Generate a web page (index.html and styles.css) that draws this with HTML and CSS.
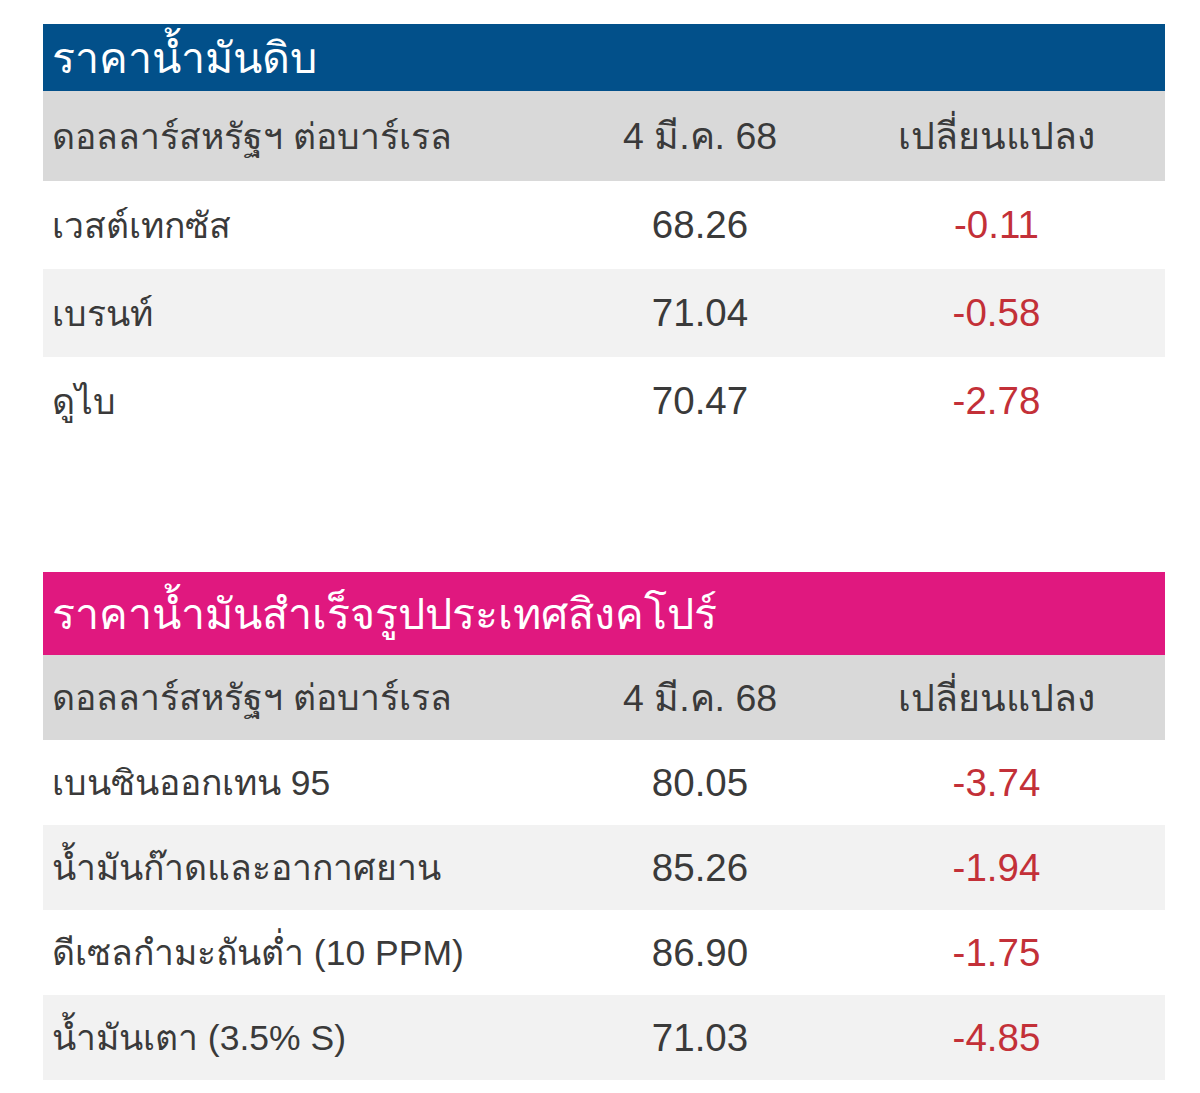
FILE: index.html
```html
<!DOCTYPE html>
<html lang="th">
<head>
<meta charset="utf-8">
<title>ราคาน้ำมัน</title>
<link rel="stylesheet" href="styles.css">
</head>
<body>
<div class="page">
  <section class="block block-crude">
    <h2 class="block-title title-blue">ราคาน้ำมันดิบ</h2>
    <table class="price-table">
      <colgroup><col class="c1"><col class="c2"><col class="c3"></colgroup>
      <thead>
        <tr><th class="label">ดอลลาร์สหรัฐฯ ต่อบาร์เรล</th><th>4 มี.ค. 68</th><th>เปลี่ยนแปลง</th></tr>
      </thead>
      <tbody>
        <tr><td class="label">เวสต์เทกซัส</td><td>68.26</td><td class="neg">-0.11</td></tr>
        <tr><td class="label">เบรนท์</td><td>71.04</td><td class="neg">-0.58</td></tr>
        <tr><td class="label">ดูไบ</td><td>70.47</td><td class="neg">-2.78</td></tr>
      </tbody>
    </table>
  </section>
  <section class="block block-sg">
    <h2 class="block-title title-pink">ราคาน้ำมันสำเร็จรูปประเทศสิงคโปร์</h2>
    <table class="price-table">
      <colgroup><col class="c1"><col class="c2"><col class="c3"></colgroup>
      <thead>
        <tr><th class="label">ดอลลาร์สหรัฐฯ ต่อบาร์เรล</th><th>4 มี.ค. 68</th><th>เปลี่ยนแปลง</th></tr>
      </thead>
      <tbody>
        <tr><td class="label">เบนซินออกเทน 95</td><td>80.05</td><td class="neg">-3.74</td></tr>
        <tr><td class="label">น้ำมันก๊าดและอากาศยาน</td><td>85.26</td><td class="neg">-1.94</td></tr>
        <tr><td class="label">ดีเซลกำมะถันต่ำ (10 PPM)</td><td>86.90</td><td class="neg">-1.75</td></tr>
        <tr><td class="label">น้ำมันเตา (3.5% S)</td><td>71.03</td><td class="neg">-4.85</td></tr>
      </tbody>
    </table>
  </section>
</div>
</body>
</html>
```

FILE: styles.css
```css
html, body {
  margin: 0;
  padding: 0;
  background: #ffffff;
}

body {
  font-family: "Liberation Sans", Arial, sans-serif;
  color: #3a3a3a;
}

.page {
  padding: 24px 35px 0 43px;
  width: 1122px;
}

.block-sg {
  margin-top: 127px;
}

.block-title {
  margin: 0;
  color: #ffffff;
  font-weight: normal;
  font-size: 43px;
  padding-left: 9px;
  display: flex;
  align-items: center;
}

.title-blue {
  background: #02508a;
  height: 67px;
}

.title-pink {
  background: #e0187f;
  height: 83px;
}

.price-table {
  width: 1122px;
  border-collapse: collapse;
  table-layout: fixed;
  font-size: 38.5px;
}

.c1 { width: 529px; }
.c2 { width: 256px; }
.c3 { width: 337px; }

.price-table th,
.price-table td {
  padding: 0;
  text-align: center;
  font-weight: normal;
  vertical-align: middle;
}

.price-table th {
  font-size: 37.5px;
}

.price-table th.label,
.price-table td.label {
  text-align: left;
  padding-left: 9px;
  font-size: 35.5px;
}

.price-table thead tr {
  background: #d9d9d9;
}

.block-crude thead tr { height: 90px; }
.block-crude tbody tr { height: 88px; }
.block-sg thead tr { height: 85px; }
.block-sg tbody tr { height: 85px; }

.price-table tbody tr:nth-child(even) {
  background: #f2f2f2;
}

.price-table td.neg {
  color: #c33038;
}
```
